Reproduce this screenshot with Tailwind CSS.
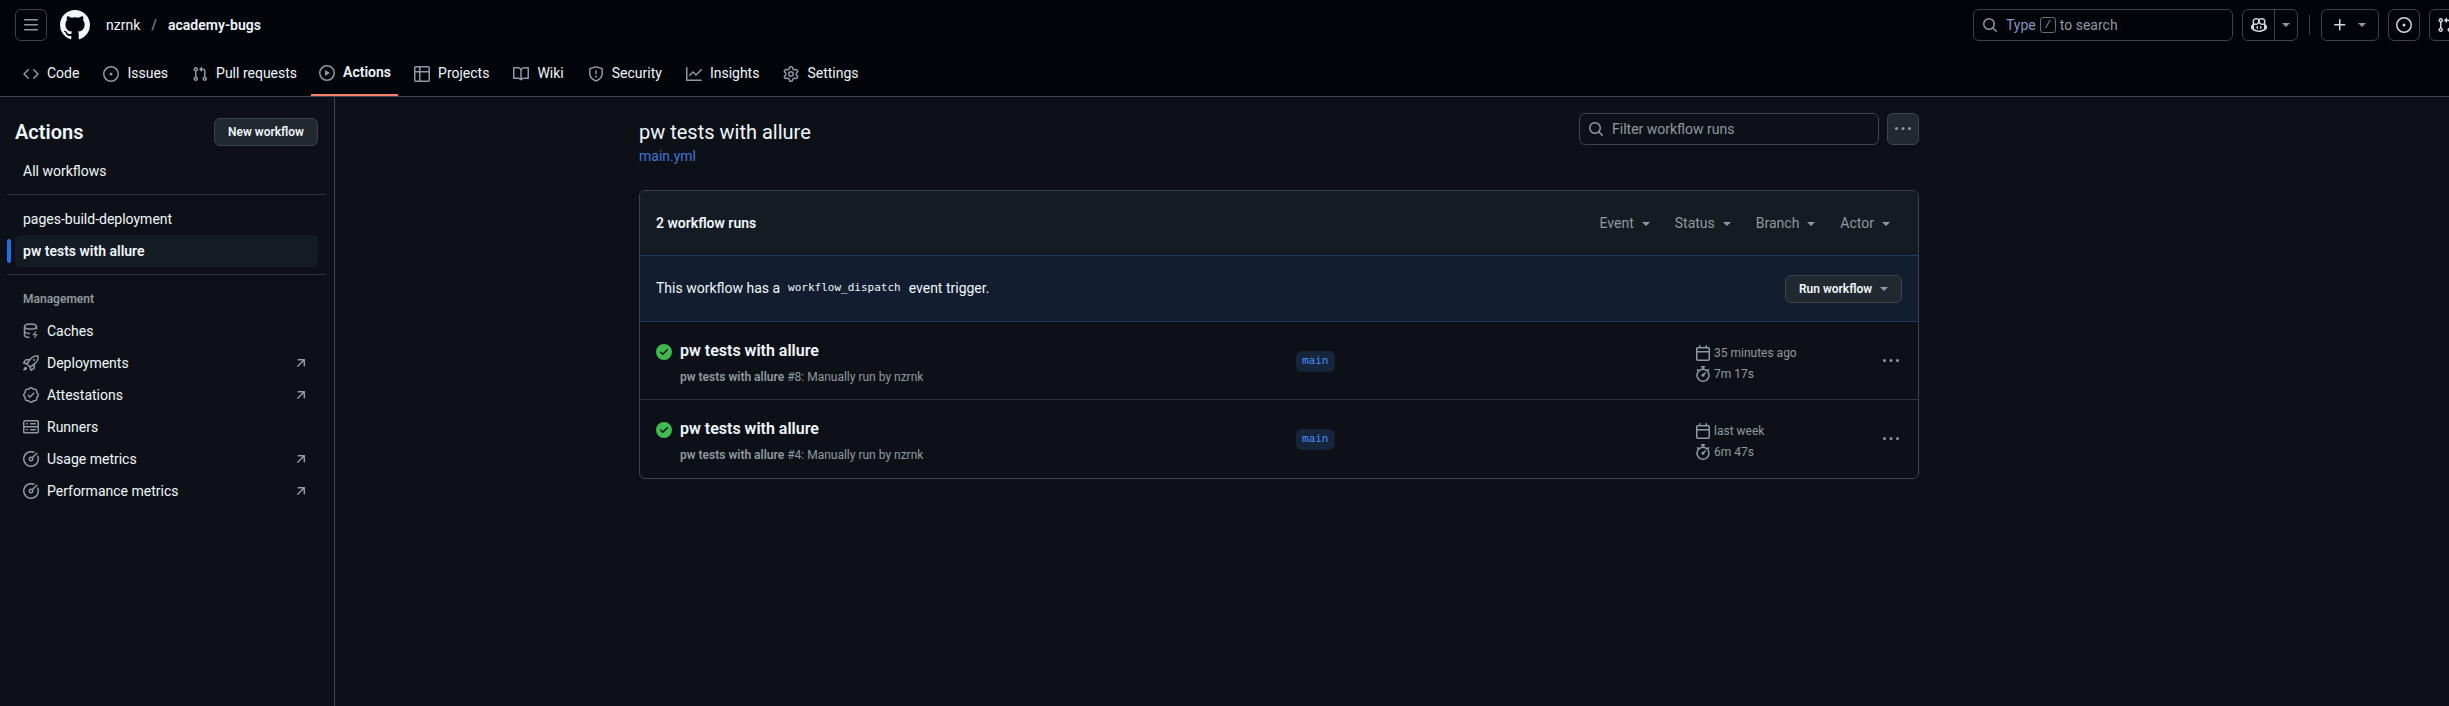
<!DOCTYPE html>
<html><head><meta charset="utf-8">
<script src="https://cdn.jsdelivr.net/npm/@tailwindcss/browser@4"></script>
</head>
<body class="bg-[#0d1117] text-[#f0f6fc] font-['Roboto','Open_Sans',sans-serif] text-[14px] overflow-hidden">
<svg class="hidden"><defs>
<symbol id="kebab" viewBox="0 0 16 16"><path d="M8 9a1.5 1.5 0 1 0 0-3 1.5 1.5 0 0 0 0 3ZM1.5 9a1.5 1.5 0 1 0 0-3 1.5 1.5 0 0 0 0 3Zm13 0a1.5 1.5 0 1 0 0-3 1.5 1.5 0 0 0 0 3Z"/></symbol>
<symbol id="search" viewBox="0 0 16 16"><path d="M10.68 11.74a6 6 0 0 1-7.922-8.982 6 6 0 0 1 8.982 7.922l3.04 3.04a.749.749 0 0 1-.326 1.275.749.749 0 0 1-.734-.215ZM11.5 7a4.499 4.499 0 1 0-8.997 0A4.499 4.499 0 0 0 11.5 7Z"/></symbol>
<symbol id="issue" viewBox="0 0 16 16"><path d="M8 9.5a1.5 1.5 0 1 0 0-3 1.5 1.5 0 0 0 0 3Z"/><path d="M8 0a8 8 0 1 1 0 16A8 8 0 0 1 8 0ZM1.5 8a6.5 6.5 0 1 0 13 0 6.5 6.5 0 0 0-13 0Z"/></symbol>
<symbol id="pr" viewBox="0 0 16 16"><path d="M1.5 3.25a2.25 2.25 0 1 1 3 2.122v5.256a2.251 2.251 0 1 1-1.5 0V5.372A2.25 2.25 0 0 1 1.5 3.25Zm5.677-.177L9.573.677A.25.25 0 0 1 10 .854V2.5h1A2.5 2.5 0 0 1 13.5 5v5.628a2.251 2.251 0 1 1-1.5 0V5a1 1 0 0 0-1-1h-1v1.646a.25.25 0 0 1-.427.177L7.177 3.427a.25.25 0 0 1 0-.354ZM3.75 2.5a.75.75 0 1 0 0 1.5.75.75 0 0 0 0-1.5Zm0 9.5a.75.75 0 1 0 0 1.5.75.75 0 0 0 0-1.5Zm8.25.75a.75.75 0 1 0 1.5 0 .75.75 0 0 0-1.5 0Z"/></symbol>
<symbol id="arrow" viewBox="0 0 16 16"><path d="M4.53 4.75A.75.75 0 0 1 5.28 4h6.01a.75.75 0 0 1 .75.75v6.01a.75.75 0 0 1-1.5 0v-4.2l-5.26 5.261a.749.749 0 0 1-1.275-.326.749.749 0 0 1 .215-.734L9.48 5.5h-4.2a.75.75 0 0 1-.75-.75Z"/></symbol>
<symbol id="meter" viewBox="0 0 16 16"><path d="M8 1.5a6.5 6.5 0 1 0 6.016 4.035.75.75 0 0 1 1.388-.57 8 8 0 1 1-4.37-4.37.75.75 0 0 1-.569 1.388A6.479 6.479 0 0 0 8 1.5Zm6.28.22a.75.75 0 0 1 0 1.06l-4.063 4.064a2.5 2.5 0 1 1-1.06-1.06L13.22 1.72a.75.75 0 0 1 1.06 0ZM7 8a1 1 0 1 0 2 0 1 1 0 0 0-2 0Z"/></symbol>
<symbol id="check" viewBox="0 0 16 16"><path d="M8 16A8 8 0 1 1 8 0a8 8 0 0 1 0 16Zm3.78-9.72a.751.751 0 0 0-.018-1.042.751.751 0 0 0-1.042-.018L6.75 9.19 5.28 7.72a.751.751 0 0 0-1.042.018.751.751 0 0 0-.018 1.042l2 2a.75.75 0 0 0 1.06 0Z"/></symbol>
<symbol id="cal" viewBox="0 0 16 16"><path d="M4.75 0a.75.75 0 0 1 .75.75V2h5V.75a.75.75 0 0 1 1.5 0V2h1.25c.966 0 1.75.784 1.75 1.75v10.5A1.75 1.75 0 0 1 13.25 16H2.75A1.75 1.75 0 0 1 1 14.25V3.75C1 2.784 1.784 2 2.75 2H4V.75A.75.75 0 0 1 4.75 0ZM2.5 7.5v6.75c0 .138.112.25.25.25h10.5a.25.25 0 0 0 .25-.25V7.5Zm10.75-4H2.75a.25.25 0 0 0-.25.25V6h11V3.75a.25.25 0 0 0-.25-.25Z"/></symbol>
<symbol id="watch" viewBox="0 0 16 16"><path d="M5.75.75A.75.75 0 0 1 6.5 0h3a.75.75 0 0 1 0 1.5h-.75v1l-.001.041a6.724 6.724 0 0 1 3.464 1.435l.007-.006.75-.75a.749.749 0 0 1 1.275.326.749.749 0 0 1-.215.734l-.75.75-.006.007a6.75 6.75 0 1 1-10.548 0L2.72 5.03l-.75-.75a.751.751 0 0 1 .018-1.042.751.751 0 0 1 1.042-.018l.75.75.007.006A6.72 6.72 0 0 1 7.25 2.541V1.5H6.5a.75.75 0 0 1-.75-.75ZM8 14.5a5.25 5.25 0 1 0-.001-10.501A5.25 5.25 0 0 0 8 14.5Zm.389-6.7 1.33-1.33a.75.75 0 1 1 1.061 1.06L9.45 8.861A1.503 1.503 0 0 1 8 10.75a1.499 1.499 0 1 1 .389-2.95Z"/></symbol>
</defs></svg>

<header class="h-[97px] bg-[#010409] border-b border-[#3d444d] flex flex-col">
  <div class="h-[49px] pt-[9px] pl-[15px] flex items-start">
    <button class="w-[32px] h-[32px] border border-[#3d444d] rounded-md flex items-center justify-center text-[#9198a1]"><svg class="w-4 h-4 fill-current" viewBox="0 0 16 16"><path d="M1 2.75A.75.75 0 0 1 1.75 2h12.5a.75.75 0 0 1 0 1.5H1.75A.75.75 0 0 1 1 2.75Zm0 5A.75.75 0 0 1 1.75 7h12.5a.75.75 0 0 1 0 1.5H1.75A.75.75 0 0 1 1 7.75ZM1.75 12h12.5a.75.75 0 0 1 0 1.5H1.75a.75.75 0 0 1 0-1.5Z"/></svg></button>
    <svg class="w-[30px] h-[30px] ml-[13px] mt-[1px] fill-[#f0f6fc]" viewBox="0 0 16 16"><path d="M8 0c4.42 0 8 3.58 8 8a8.013 8.013 0 0 1-5.45 7.59c-.4.08-.55-.17-.55-.38 0-.27.01-1.13.01-2.2 0-.75-.25-1.23-.54-1.48 1.78-.2 3.65-.88 3.65-3.95 0-.88-.31-1.59-.82-2.15.08-.2.36-1.02-.08-2.12 0 0-.67-.22-2.2.82-.64-.18-1.32-.27-2-.27-.68 0-1.36.09-2 .27-1.53-1.03-2.2-.82-2.2-.82-.44 1.1-.16 1.92-.08 2.12-.51.56-.82 1.28-.82 2.15 0 3.06 1.86 3.75 3.64 3.95-.23.2-.44.55-.51 1.07-.46.21-1.61.55-2.33-.66-.15-.24-.6-.83-1.23-.82-.67.01-.27.38.01.53.34.19.73.9.82 1.13.16.45.68 1.31 2.69.94 0 .67.01 1.3.01 1.49 0 .21-.15.45-.55.38A7.995 7.995 0 0 1 0 8c0-4.42 3.58-8 8-8Z"/></svg>
    <span class="ml-[16px] leading-[32px]">nzrnk</span>
    <span class="ml-[11px] leading-[32px] text-[#9198a1]">/</span>
    <span class="ml-[11px] leading-[32px] font-semibold">academy-bugs</span>
    <div class="ml-auto flex items-center gap-[9px]">
      <div class="w-[260px] h-[32px] border border-[#3d444d] rounded-md flex items-center pl-[8px] text-[#9198a1]">
        <svg class="w-4 h-4 fill-current"><use href="#search"/></svg>
        <span class="ml-[8px] text-[#8b93c4]">Type</span>
        <span class="ml-[4px] w-[16px] h-[16px] border border-[#656c76] rounded-[3px] flex items-center justify-center text-[11px] font-['Liberation_Mono',monospace]">/</span>
        <span class="ml-[4px]">to search</span>
      </div>
      <div class="h-[32px] w-[56px] border border-[#3d444d] rounded-md flex text-[#9198a1]">
        <span class="w-[32px] border-r border-[#3d444d] flex items-center justify-center"><svg class="w-4 h-4 fill-[#d1d7e0]" viewBox="0 0 16 16"><path d="M7.998 15.035c-4.562 0-7.873-2.914-7.998-3.749V9.338c.085-.628.677-1.686 1.588-2.065.013-.07.024-.143.036-.218.029-.183.06-.384.126-.612-.201-.508-.254-1.084-.254-1.656 0-.87.128-1.769.693-2.484.579-.733 1.494-1.124 2.724-1.261 1.206-.134 2.262.034 2.944.765.05.053.096.108.139.165.044-.057.094-.112.143-.165.682-.731 1.738-.899 2.944-.765 1.23.137 2.145.528 2.724 1.261.566.715.693 1.614.693 2.484 0 .572-.053 1.148-.254 1.656.066.228.098.429.126.612.012.076.024.148.037.218.924.385 1.522 1.471 1.591 2.095v1.872c0 .766-3.351 3.795-8.002 3.795Zm0-1.485c2.28 0 4.584-1.11 5.002-1.433V7.862l-.023-.116c-.49.21-1.075.291-1.727.291-1.146 0-2.059-.327-2.71-.991A3.222 3.222 0 0 1 8 6.303a3.24 3.24 0 0 1-.544.743c-.65.664-1.563.991-2.71.991-.652 0-1.236-.081-1.727-.291l-.023.116v4.255c.419.323 2.722 1.433 5.002 1.433ZM6.762 2.83c-.193-.206-.637-.413-1.682-.297-1.019.113-1.479.404-1.713.7-.247.312-.369.789-.369 1.554 0 .793.129 1.171.308 1.371.162.181.519.379 1.442.379.853 0 1.339-.235 1.638-.54.315-.322.527-.827.617-1.553.117-.935-.037-1.395-.241-1.614Zm4.155-.297c-1.044-.116-1.488.091-1.681.297-.204.219-.359.679-.242 1.614.091.726.303 1.231.618 1.553.299.305.784.54 1.638.54.922 0 1.28-.198 1.442-.379.179-.2.308-.578.308-1.371 0-.765-.123-1.242-.37-1.554-.233-.296-.693-.587-1.713-.7Z"/><path d="M6.25 9.037a.75.75 0 0 1 .75.75v1.501a.75.75 0 0 1-1.5 0V9.787a.75.75 0 0 1 .75-.75Zm4.25.75v1.501a.75.75 0 0 1-1.5 0V9.787a.75.75 0 0 1 1.5 0Z"/></svg></span>
        <span class="flex-1 flex items-center justify-center"><span class="border-x-[4px] border-t-[4px] border-x-transparent border-t-current"></span></span>
      </div>
      <span class="w-px h-[20px] bg-[#3d444d] mx-[2px]"></span>
      <div class="h-[32px] w-[58px] border border-[#3d444d] rounded-md flex items-center pl-[10px] text-[#9198a1]">
        <svg class="w-4 h-4 fill-[#d1d7e0]" viewBox="0 0 16 16"><path d="M7.75 2a.75.75 0 0 1 .75.75V7h4.25a.75.75 0 0 1 0 1.5H8.5v4.25a.75.75 0 0 1-1.5 0V8.5H2.75a.75.75 0 0 1 0-1.5H7V2.75A.75.75 0 0 1 7.75 2Z"/></svg>
        <span class="ml-[10px] border-x-[4px] border-t-[4px] border-x-transparent border-t-current"></span>
      </div>
      <button class="w-[32px] h-[32px] border border-[#3d444d] rounded-md flex items-center justify-center"><svg class="w-4 h-4 fill-[#d1d7e0]"><use href="#issue"/></svg></button>
      <button class="w-[32px] h-[32px] border border-[#3d444d] rounded-md flex items-center justify-center shrink-0 mr-[-12px]"><svg class="w-4 h-4 fill-[#d1d7e0]"><use href="#pr"/></svg></button>
    </div>
  </div>
  <nav class="flex-1 flex pl-[15px] items-start text-[14px] text-[#f0f6fc]">
    <a class="h-[47px] pt-[2px] flex items-center gap-[8px] px-[8px] text-[#f0f6fc]"><svg class="w-4 h-4 fill-[#9198a1]" viewBox="0 0 16 16"><path d="m11.28 3.22 4.25 4.25a.75.75 0 0 1 0 1.06l-4.25 4.25a.749.749 0 0 1-1.275-.326.749.749 0 0 1 .215-.734L13.94 8l-3.72-3.72a.749.749 0 0 1 .326-1.275.749.749 0 0 1 .734.215Zm-6.56 0a.751.751 0 0 1 1.042.018.751.751 0 0 1 .018 1.042L2.06 8l3.72 3.72a.749.749 0 0 1-.326 1.275.749.749 0 0 1-.734-.215L.47 8.53a.75.75 0 0 1 0-1.06Z"/></svg>Code</a>
    <a class="h-[47px] pt-[2px] flex items-center gap-[8px] px-[8px] ml-[8px]"><svg class="w-4 h-4 fill-[#9198a1]"><use href="#issue"/></svg>Issues</a>
    <a class="h-[47px] pt-[2px] flex items-center gap-[8px] px-[8px] ml-[8px]"><svg class="w-4 h-4 fill-[#9198a1]"><use href="#pr"/></svg>Pull requests</a>
    <a class="h-[47px] pt-[2px] flex items-center gap-[8px] px-[8px] ml-[6px] w-[87px] font-semibold border-b-2 border-[#f78166]"><svg class="w-4 h-4 shrink-0 fill-[#9198a1]" viewBox="0 0 16 16"><path d="M8 0a8 8 0 1 1 0 16A8 8 0 0 1 8 0ZM1.5 8a6.5 6.5 0 1 0 13 0 6.5 6.5 0 0 0-13 0Zm4.879-2.773 4.264 2.559a.25.25 0 0 1 0 .428l-4.264 2.559A.25.25 0 0 1 6 10.559V5.442a.25.25 0 0 1 .379-.215Z"/></svg>Actions</a>
    <a class="h-[47px] pt-[2px] flex items-center gap-[8px] px-[8px] ml-[8px]"><svg class="w-4 h-4 fill-[#9198a1]" viewBox="0 0 16 16"><path d="M0 1.75C0 .784.784 0 1.75 0h12.5C15.216 0 16 .784 16 1.75v12.5A1.75 1.75 0 0 1 14.25 16H1.75A1.75 1.75 0 0 1 0 14.25ZM6.5 6.5v8h7.75a.25.25 0 0 0 .25-.25V6.5Zm8-1.5V1.75a.25.25 0 0 0-.25-.25H6.5V5Zm-13 1.5v7.75c0 .138.112.25.25.25H5v-8ZM5 5V1.5H1.75a.25.25 0 0 0-.25.25V5Z"/></svg>Projects</a>
    <a class="h-[47px] pt-[2px] flex items-center gap-[8px] px-[8px] ml-[8px]"><svg class="w-4 h-4 fill-[#9198a1]" viewBox="0 0 16 16"><path d="M0 1.75A.75.75 0 0 1 .75 1h4.253c1.227 0 2.317.59 3 1.501A3.743 3.743 0 0 1 11.006 1h4.245a.75.75 0 0 1 .75.75v10.5a.75.75 0 0 1-.75.75h-4.507a2.25 2.25 0 0 0-1.591.659l-.622.621a.75.75 0 0 1-1.06 0l-.622-.621A2.25 2.25 0 0 0 5.258 13H.75a.75.75 0 0 1-.75-.75Zm7.251 10.324.004-5.073-.002-2.253A2.25 2.25 0 0 0 5.003 2.5H1.5v9h3.757a3.75 3.75 0 0 1 1.994.574ZM8.755 4.75l-.004 7.322a3.752 3.752 0 0 1 1.992-.572H14.5v-9h-3.495a2.25 2.25 0 0 0-2.25 2.25Z"/></svg>Wiki</a>
    <a class="h-[47px] pt-[2px] flex items-center gap-[8px] px-[8px] ml-[8px]"><svg class="w-4 h-4 fill-[#9198a1]" viewBox="0 0 16 16"><path d="M7.467.133a1.748 1.748 0 0 1 1.066 0l5.25 1.68A1.75 1.75 0 0 1 15 3.48V7c0 1.566-.32 3.182-1.303 4.682-.983 1.498-2.585 2.813-5.032 3.855a1.697 1.697 0 0 1-1.33 0c-2.447-1.042-4.049-2.357-5.032-3.855C1.32 10.182 1 8.566 1 7V3.48a1.75 1.75 0 0 1 1.217-1.667Zm.61 1.429a.25.25 0 0 0-.153 0l-5.25 1.68a.25.25 0 0 0-.174.238V7c0 1.358.275 2.666 1.057 3.86.784 1.194 2.121 2.34 4.366 3.297a.196.196 0 0 0 .154 0c2.245-.956 3.582-2.104 4.366-3.298C13.225 9.666 13.5 8.36 13.5 7V3.48a.251.251 0 0 0-.174-.237l-5.25-1.68ZM8.75 4.75v3a.75.75 0 0 1-1.5 0v-3a.75.75 0 0 1 1.5 0ZM9 10.5a1 1 0 1 1-2 0 1 1 0 0 1 2 0Z"/></svg>Security</a>
    <a class="h-[47px] pt-[2px] flex items-center gap-[8px] px-[8px] ml-[8px]"><svg class="w-4 h-4 fill-[#9198a1]" viewBox="0 0 16 16"><path d="M1.5 1.75V13.5h13.75a.75.75 0 0 1 0 1.5H.75a.75.75 0 0 1-.75-.75V1.75a.75.75 0 0 1 1.5 0Zm14.28 2.53-5.25 5.25a.75.75 0 0 1-1.06 0L7 7.06 4.28 9.78a.751.751 0 0 1-1.042-.018.751.751 0 0 1-.018-1.042l3.25-3.25a.75.75 0 0 1 1.06 0L10 7.94l4.72-4.72a.751.751 0 0 1 1.042.018.751.751 0 0 1 .018 1.042Z"/></svg>Insights</a>
    <a class="h-[47px] pt-[2px] flex items-center gap-[8px] px-[8px] ml-[8px]"><svg class="w-4 h-4 fill-[#9198a1]" viewBox="0 0 16 16"><path d="M8 0a8.2 8.2 0 0 1 .701.031C9.444.095 9.99.645 10.16 1.29l.288 1.107c.018.066.079.158.212.224.231.114.454.243.668.386.123.082.233.09.299.071l1.103-.303c.644-.176 1.392.021 1.82.63.27.385.506.792.704 1.218.315.675.111 1.422-.364 1.891l-.814.806c-.049.048-.098.147-.088.294.016.257.016.515 0 .772-.01.147.038.246.088.294l.814.806c.475.469.679 1.216.364 1.891a7.977 7.977 0 0 1-.704 1.217c-.428.61-1.176.807-1.82.63l-1.102-.302c-.067-.019-.177-.011-.3.071a5.909 5.909 0 0 1-.668.386c-.133.066-.194.158-.211.224l-.29 1.106c-.168.646-.715 1.196-1.458 1.26a8.006 8.006 0 0 1-1.402 0c-.743-.064-1.289-.614-1.458-1.26l-.289-1.106c-.018-.066-.079-.158-.212-.224a5.738 5.738 0 0 1-.668-.386c-.123-.082-.233-.09-.299-.071l-1.103.303c-.644.176-1.392-.021-1.82-.63a8.12 8.12 0 0 1-.704-1.218c-.315-.675-.111-1.422.363-1.891l.815-.806c.05-.048.098-.147.088-.294a6.214 6.214 0 0 1 0-.772c.01-.147-.038-.246-.088-.294l-.815-.806C.635 6.045.431 5.298.746 4.623a7.92 7.92 0 0 1 .704-1.217c.428-.61 1.176-.807 1.82-.63l1.102.302c.067.019.177.011.3-.071.214-.143.437-.272.668-.386.133-.066.194-.158.211-.224l.29-1.106C6.009.645 6.556.095 7.299.03 7.53.01 7.764 0 8 0Zm-.571 1.525c-.036.003-.108.036-.137.146l-.289 1.105c-.147.561-.549.967-.998 1.189-.173.086-.34.183-.5.29-.417.278-.97.423-1.529.27l-1.103-.303c-.109-.03-.175.016-.195.045-.22.312-.412.644-.573.99-.014.031-.021.11.059.19l.815.806c.411.406.562.957.53 1.456a4.709 4.709 0 0 0 0 .582c.032.499-.119 1.05-.53 1.456l-.815.806c-.081.08-.073.159-.059.19.162.346.353.677.573.989.02.03.085.076.195.046l1.102-.303c.56-.153 1.113-.008 1.53.27.161.107.328.204.501.29.447.222.85.629.997 1.189l.289 1.105c.029.109.101.143.137.146a6.6 6.6 0 0 0 1.142 0c.036-.003.108-.036.137-.146l.289-1.105c.147-.561.549-.967.998-1.189.173-.086.34-.183.5-.29.417-.278.97-.423 1.529-.27l1.103.303c.109.029.175-.016.195-.045.22-.313.411-.644.573-.99.014-.031.021-.11-.059-.19l-.815-.806c-.411-.406-.562-.957-.53-1.456a4.709 4.709 0 0 0 0-.582c-.032-.499.119-1.05.53-1.456l.815-.806c.081-.08.073-.159.059-.19a6.464 6.464 0 0 0-.573-.989c-.02-.03-.085-.076-.195-.046l-1.102.303c-.56.153-1.113.008-1.53-.27a4.44 4.44 0 0 0-.501-.29c-.447-.222-.85-.629-.997-1.189l-.289-1.105c-.029-.11-.101-.143-.137-.146a6.6 6.6 0 0 0-1.142 0ZM11 8a3 3 0 1 1-6 0 3 3 0 0 1 6 0ZM9.5 8a1.5 1.5 0 1 0-3.001.001A1.5 1.5 0 0 0 9.5 8Z"/></svg>Settings</a>
  </nav>
</header>

<div class="flex h-[609px]">
  <aside class="w-[335px] shrink-0 border-r border-[#3d444d] pl-[7px] pr-[8px] pt-[21px]">
    <div class="flex items-center justify-between pl-[8px] pr-[8px] h-[28px]">
      <h2 class="text-[20px] font-semibold">Actions</h2>
      <button class="h-[28px] w-[104px] bg-[#212830] border border-[#3d444d] rounded-md text-[12px] font-semibold">New workflow</button>
    </div>
    <div class="pl-[16px] h-[32px] mt-[9px] flex items-center">All workflows</div>
    <div class="h-px bg-[#3d444db3] mt-[7px]"></div>
    <div class="pl-[16px] h-[32px] mt-[8px] flex items-center">pages-build-deployment</div>
    <div class="relative h-[32px] ml-[8px] mr-[8px] pl-[8px] flex items-center font-semibold bg-[#151b23] rounded-md">
      <span class="absolute left-[-8px] top-[4px] w-[4px] h-[24px] bg-[#1f6feb] rounded-md"></span>pw tests with allure
    </div>
    <div class="h-px bg-[#3d444db3] mt-[7px]"></div>
    <div class="pl-[16px] mt-[15px] h-[18px] flex items-center text-[12px] font-semibold text-[#9198a1]">Management</div>
    <div class="mt-[7px] flex flex-col text-[#f0f6fc]">
      <div class="h-[32px] pl-[16px] pr-[17px] flex items-center gap-[8px]"><svg class="w-4 h-4 fill-none stroke-[#9198a1] stroke-[1.5]" viewBox="0 0 16 16"><ellipse cx="7.5" cy="3.5" rx="6" ry="2.6"/><path d="M1.5 3.5v8.5c0 1.3 2.4 2.3 5 2.5M13.5 3.5v3M1.5 8c0 1.4 2.7 2.5 5.5 2.5"/><path d="M13 8.5l-2.5 3.2h3L11.5 15" stroke-width="1.2"/></svg>Caches</div>
      <div class="h-[32px] pl-[16px] pr-[17px] flex items-center gap-[8px]"><svg class="w-4 h-4 fill-[#9198a1]" viewBox="0 0 16 16"><path d="M14.064 0h.186C15.216 0 16 .784 16 1.75v.186a8.752 8.752 0 0 1-2.564 6.186l-.458.459c-.314.314-.641.616-.979.904v3.207c0 .608-.315 1.172-.833 1.49l-2.774 1.707a.749.749 0 0 1-1.11-.418l-.954-3.102a1.214 1.214 0 0 1-.145-.125L3.754 9.816a1.218 1.218 0 0 1-.124-.145L.528 8.717a.749.749 0 0 1-.418-1.11l1.71-2.774A1.748 1.748 0 0 1 3.31 4h3.204c.288-.338.59-.665.904-.979l.459-.458A8.749 8.749 0 0 1 14.064 0ZM8.938 3.623h-.002l-.458.458c-.76.76-1.437 1.598-2.02 2.5l-1.5 2.317 2.143 2.143 2.317-1.5c.902-.583 1.74-1.26 2.499-2.02l.459-.458a7.25 7.25 0 0 0 2.123-5.127V1.75a.25.25 0 0 0-.25-.25h-.186a7.249 7.249 0 0 0-5.125 2.123ZM3.56 14.56c-.732.732-2.334 1.045-3.005 1.148a.234.234 0 0 1-.201-.064.234.234 0 0 1-.064-.201c.103-.671.416-2.273 1.15-3.003a1.502 1.502 0 1 1 2.12 2.12Zm6.94-3.935c-.088.06-.177.118-.266.175l-2.35 1.521.548 1.783 1.949-1.2a.25.25 0 0 0 .119-.213ZM3.678 8.116 5.2 5.766c.058-.09.117-.178.176-.266H3.309a.25.25 0 0 0-.213.119l-1.2 1.95ZM12 5a1 1 0 1 1-2 0 1 1 0 0 1 2 0Z"/></svg>Deployments<svg class="w-4 h-4 fill-[#9198a1] ml-auto"><use href="#arrow"/></svg></div>
      <div class="h-[32px] pl-[16px] pr-[17px] flex items-center gap-[8px]"><svg class="w-4 h-4 fill-[#9198a1]" viewBox="0 0 16 16"><path d="m9.585.52.929.68c.153.112.331.186.518.215l1.138.175a2.678 2.678 0 0 1 2.24 2.24l.174 1.139c.029.187.103.365.215.518l.68.928a2.677 2.677 0 0 1 0 3.17l-.68.928a1.174 1.174 0 0 0-.215.518l-.175 1.138a2.678 2.678 0 0 1-2.241 2.241l-1.138.175a1.17 1.17 0 0 0-.518.215l-.928.68a2.677 2.677 0 0 1-3.17 0l-.928-.68a1.174 1.174 0 0 0-.518-.215L3.83 14.41a2.678 2.678 0 0 1-2.24-2.24l-.175-1.138a1.17 1.17 0 0 0-.215-.518l-.68-.928a2.677 2.677 0 0 1 0-3.17l.68-.928c.112-.153.186-.331.215-.518l.175-1.14a2.678 2.678 0 0 1 2.24-2.24l1.139-.175c.187-.029.365-.103.518-.215l.928-.68a2.677 2.677 0 0 1 3.17 0ZM7.303 1.728l-.927.68a2.67 2.67 0 0 1-1.18.489l-1.137.174a1.179 1.179 0 0 0-.987.987l-.174 1.136a2.677 2.677 0 0 1-.489 1.18l-.68.928a1.18 1.18 0 0 0 0 1.394l.68.927c.256.348.424.753.489 1.18l.174 1.137c.078.509.478.909.987.987l1.136.174a2.67 2.67 0 0 1 1.18.489l.928.68c.414.305.979.305 1.394 0l.927-.68a2.67 2.67 0 0 1 1.18-.489l1.137-.174a1.18 1.18 0 0 0 .987-.987l.174-1.136a2.67 2.67 0 0 1 .489-1.18l.68-.928a1.176 1.176 0 0 0 0-1.394l-.68-.927a2.686 2.686 0 0 1-.489-1.18l-.174-1.137a1.179 1.179 0 0 0-.987-.987l-1.136-.174a2.677 2.677 0 0 1-1.18-.489l-.928-.68a1.176 1.176 0 0 0-1.394 0ZM11.28 6.78l-3.75 3.75a.75.75 0 0 1-1.06 0L4.72 8.78a.751.751 0 0 1 .018-1.042.751.751 0 0 1 1.042-.018l1.22 1.22 3.22-3.22a.751.751 0 0 1 1.042.018.751.751 0 0 1 .018 1.042Z"/></svg>Attestations<svg class="w-4 h-4 fill-[#9198a1] ml-auto"><use href="#arrow"/></svg></div>
      <div class="h-[32px] pl-[16px] pr-[17px] flex items-center gap-[8px]"><svg class="w-4 h-4 fill-[#9198a1]" viewBox="0 0 16 16"><path d="M1.75 1h12.5c.966 0 1.75.784 1.75 1.75v4c0 .372-.116.717-.314 1 .198.283.314.628.314 1v4a1.75 1.75 0 0 1-1.75 1.75H1.75A1.75 1.75 0 0 1 0 13.75v-4c0-.358.109-.707.314-1a1.739 1.739 0 0 1-.314-1v-4C0 1.784.784 1 1.75 1ZM1.5 2.75v4c0 .138.112.25.25.25h12.5a.25.25 0 0 0 .25-.25v-4a.25.25 0 0 0-.25-.25H1.75a.25.25 0 0 0-.25.25Zm.25 5.75a.25.25 0 0 0-.25.25v4c0 .138.112.25.25.25h12.5a.25.25 0 0 0 .25-.25v-4a.25.25 0 0 0-.25-.25ZM7 4.75A.75.75 0 0 1 7.75 4h4.5a.75.75 0 0 1 0 1.5h-4.5A.75.75 0 0 1 7 4.75ZM7.75 10h4.5a.75.75 0 0 1 0 1.5h-4.5a.75.75 0 0 1 0-1.5ZM3 4.75A.75.75 0 0 1 3.75 4h.5a.75.75 0 0 1 0 1.5h-.5A.75.75 0 0 1 3 4.75ZM3.75 10h.5a.75.75 0 0 1 0 1.5h-.5a.75.75 0 0 1 0-1.5Z"/></svg>Runners</div>
      <div class="h-[32px] pl-[16px] pr-[17px] flex items-center gap-[8px]"><svg class="w-4 h-4 fill-[#9198a1]"><use href="#meter"/></svg>Usage metrics<svg class="w-4 h-4 fill-[#9198a1] ml-auto"><use href="#arrow"/></svg></div>
      <div class="h-[32px] pl-[16px] pr-[17px] flex items-center gap-[8px]"><svg class="w-4 h-4 fill-[#9198a1]"><use href="#meter"/></svg>Performance metrics<svg class="w-4 h-4 fill-[#9198a1] ml-auto"><use href="#arrow"/></svg></div>
    </div>
  </aside>

  <main class="pl-[304px] pt-[16px] w-[1584px]">
    <div class="flex justify-between items-start h-[77px]">
      <div>
        <h1 class="text-[20px] leading-[28px] mt-[5px]">pw tests with allure</h1>
        <a class="block text-[14px] leading-[20px] text-[#3b78d8]">main.yml</a>
      </div>
      <div class="flex gap-[8px]">
        <div class="w-[300px] h-[32px] border border-[#3d444d] bg-[#0d1117] rounded-md flex items-center pl-[8px] text-[#9198a1]">
          <svg class="w-4 h-4 fill-current"><use href="#search"/></svg><span class="ml-[8px]">Filter workflow runs</span>
        </div>
        <button class="w-[32px] h-[32px] bg-[#212830] border border-[#3d444d] rounded-md flex items-center justify-center"><svg class="w-4 h-4 fill-[#9198a1]"><use href="#kebab"/></svg></button>
      </div>
    </div>
    <section class="border border-[#3d444d] rounded-md overflow-hidden">
      <div class="h-[64px] pt-[1px] bg-[#151b23] flex items-center pl-[16px] pr-[28px]">
        <span class="font-semibold">2 workflow runs</span>
        <div class="ml-auto flex gap-[25px] text-[#9198a1]">
          <span class="flex items-center gap-[8px]">Event<span class="border-x-[4px] border-t-[4px] border-x-transparent border-t-current"></span></span>
          <span class="flex items-center gap-[8px]">Status<span class="border-x-[4px] border-t-[4px] border-x-transparent border-t-current"></span></span>
          <span class="flex items-center gap-[8px]">Branch<span class="border-x-[4px] border-t-[4px] border-x-transparent border-t-current"></span></span>
          <span class="flex items-center gap-[8px]">Actor<span class="border-x-[4px] border-t-[4px] border-x-transparent border-t-current"></span></span>
        </div>
      </div>
      <div class="h-[67px] bg-[#121d2f] border-y border-[#1f3a60] flex items-center pl-[16px] pr-[16px]">
        <span>This workflow has a</span><code class="mx-[8px] text-[11px] font-['DejaVu_Sans_Mono',monospace]">workflow_dispatch</code><span>event trigger.</span>
        <button class="ml-auto h-[28px] w-[117px] bg-[#212830] border border-[#3d444d] rounded-md text-[12px] font-semibold flex items-center justify-center gap-[8px]">Run workflow<span class="border-x-[4px] border-t-[4px] border-x-transparent border-t-[#9198a1]"></span></button>
      </div>
      <div class="h-[77px] flex items-start pl-[16px] pt-[22px]">
        <svg class="w-4 h-4 fill-[#3fb950] shrink-0"><use href="#check"/></svg>
        <div class="ml-[8px] w-[616px] shrink-0 -mt-[5px]">
          <div class="text-[16px] font-semibold leading-[24px]">pw tests with allure</div>
          <div class="text-[12px] text-[#9198a1] leading-[18px] mt-[5px]"><span class="font-semibold">pw tests with allure</span> #8: Manually run by nzrnk</div>
        </div>
        <div class="w-[399px] shrink-0"><span class="inline-flex h-[21px] px-[6px] mt-[7px] rounded-md bg-[#16243c] text-[#4493f8] font-['DejaVu_Sans_Mono',monospace] text-[11px] items-center">main</span></div>
        <div class="text-[12px] text-[#9198a1] pt-[1px]">
          <div class="flex items-center gap-[3px] h-[16px]"><svg class="w-4 h-4 fill-current"><use href="#cal"/></svg>35 minutes ago</div>
          <div class="flex items-center gap-[3px] h-[16px] mt-[5px]"><svg class="w-4 h-4 fill-current"><use href="#watch"/></svg>7m 17s</div>
        </div>
        <svg class="ml-auto mr-[19px] mt-[9px] w-4 h-4 fill-[#9198a1]"><use href="#kebab"/></svg>
      </div>
      <div class="h-[79px] flex items-start pl-[16px] pt-[22px] border-t border-[#3d444db3]">
        <svg class="w-4 h-4 fill-[#3fb950] shrink-0"><use href="#check"/></svg>
        <div class="ml-[8px] w-[616px] shrink-0 -mt-[5px]">
          <div class="text-[16px] font-semibold leading-[24px]">pw tests with allure</div>
          <div class="text-[12px] text-[#9198a1] leading-[18px] mt-[5px]"><span class="font-semibold">pw tests with allure</span> #4: Manually run by nzrnk</div>
        </div>
        <div class="w-[399px] shrink-0"><span class="inline-flex h-[21px] px-[6px] mt-[7px] rounded-md bg-[#16243c] text-[#4493f8] font-['DejaVu_Sans_Mono',monospace] text-[11px] items-center">main</span></div>
        <div class="text-[12px] text-[#9198a1] pt-[1px]">
          <div class="flex items-center gap-[3px] h-[16px]"><svg class="w-4 h-4 fill-current"><use href="#cal"/></svg>last week</div>
          <div class="flex items-center gap-[3px] h-[16px] mt-[5px]"><svg class="w-4 h-4 fill-current"><use href="#watch"/></svg>6m 47s</div>
        </div>
        <svg class="ml-auto mr-[19px] mt-[9px] w-4 h-4 fill-[#9198a1]"><use href="#kebab"/></svg>
      </div>
    </section>
  </main>
</div>
</body></html>
